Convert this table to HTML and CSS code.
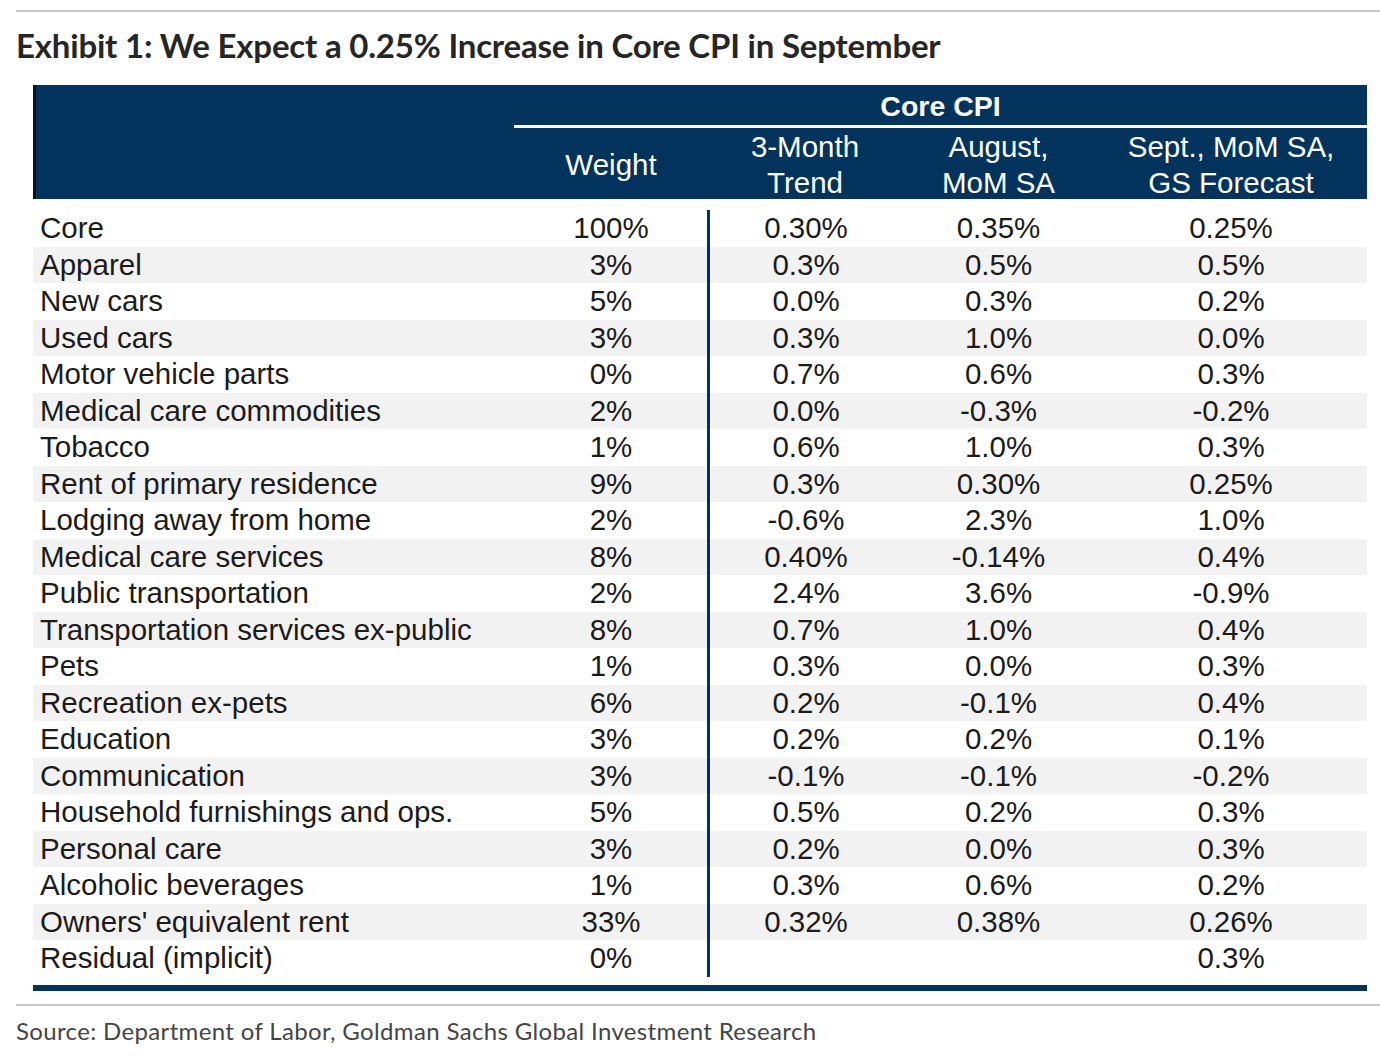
FILE: index.html
```html
<!DOCTYPE html>
<html lang="en">
<head>
<meta charset="utf-8">
<title>Exhibit 1: Core CPI</title>
<link rel="stylesheet" href="styles.css">
</head>
<body>
<div class="page">
  <div class="top-rule"></div>
  <h1 class="title">Exhibit 1: We Expect a 0.25% Increase in Core CPI in September</h1>
  <div class="exhibit">
    <div class="head">
      <div class="h-blank"></div>
      <div class="h-group">Core CPI</div>
      <div class="h-line"></div>
      <div class="h-col">Weight</div>
      <div class="h-col">3-Month<br>Trend</div>
      <div class="h-col">August,<br>MoM SA</div>
      <div class="h-col">Sept., MoM SA,<br>GS Forecast</div>
    </div>
    <div class="rows">
      <div class="row"><div class="lbl">Core</div><div class="num">100%</div><div class="num div">0.30%</div><div class="num">0.35%</div><div class="num">0.25%</div></div>
      <div class="row alt"><div class="lbl">Apparel</div><div class="num">3%</div><div class="num div">0.3%</div><div class="num">0.5%</div><div class="num">0.5%</div></div>
      <div class="row"><div class="lbl">New cars</div><div class="num">5%</div><div class="num div">0.0%</div><div class="num">0.3%</div><div class="num">0.2%</div></div>
      <div class="row alt"><div class="lbl">Used cars</div><div class="num">3%</div><div class="num div">0.3%</div><div class="num">1.0%</div><div class="num">0.0%</div></div>
      <div class="row"><div class="lbl">Motor vehicle parts</div><div class="num">0%</div><div class="num div">0.7%</div><div class="num">0.6%</div><div class="num">0.3%</div></div>
      <div class="row alt"><div class="lbl">Medical care commodities</div><div class="num">2%</div><div class="num div">0.0%</div><div class="num">-0.3%</div><div class="num">-0.2%</div></div>
      <div class="row"><div class="lbl">Tobacco</div><div class="num">1%</div><div class="num div">0.6%</div><div class="num">1.0%</div><div class="num">0.3%</div></div>
      <div class="row alt"><div class="lbl">Rent of primary residence</div><div class="num">9%</div><div class="num div">0.3%</div><div class="num">0.30%</div><div class="num">0.25%</div></div>
      <div class="row"><div class="lbl">Lodging away from home</div><div class="num">2%</div><div class="num div">-0.6%</div><div class="num">2.3%</div><div class="num">1.0%</div></div>
      <div class="row alt"><div class="lbl">Medical care services</div><div class="num">8%</div><div class="num div">0.40%</div><div class="num">-0.14%</div><div class="num">0.4%</div></div>
      <div class="row"><div class="lbl">Public transportation</div><div class="num">2%</div><div class="num div">2.4%</div><div class="num">3.6%</div><div class="num">-0.9%</div></div>
      <div class="row alt"><div class="lbl">Transportation services ex-public</div><div class="num">8%</div><div class="num div">0.7%</div><div class="num">1.0%</div><div class="num">0.4%</div></div>
      <div class="row"><div class="lbl">Pets</div><div class="num">1%</div><div class="num div">0.3%</div><div class="num">0.0%</div><div class="num">0.3%</div></div>
      <div class="row alt"><div class="lbl">Recreation ex-pets</div><div class="num">6%</div><div class="num div">0.2%</div><div class="num">-0.1%</div><div class="num">0.4%</div></div>
      <div class="row"><div class="lbl">Education</div><div class="num">3%</div><div class="num div">0.2%</div><div class="num">0.2%</div><div class="num">0.1%</div></div>
      <div class="row alt"><div class="lbl">Communication</div><div class="num">3%</div><div class="num div">-0.1%</div><div class="num">-0.1%</div><div class="num">-0.2%</div></div>
      <div class="row"><div class="lbl">Household furnishings and ops.</div><div class="num">5%</div><div class="num div">0.5%</div><div class="num">0.2%</div><div class="num">0.3%</div></div>
      <div class="row alt"><div class="lbl">Personal care</div><div class="num">3%</div><div class="num div">0.2%</div><div class="num">0.0%</div><div class="num">0.3%</div></div>
      <div class="row"><div class="lbl">Alcoholic beverages</div><div class="num">1%</div><div class="num div">0.3%</div><div class="num">0.6%</div><div class="num">0.2%</div></div>
      <div class="row alt"><div class="lbl">Owners' equivalent rent</div><div class="num">33%</div><div class="num div">0.32%</div><div class="num">0.38%</div><div class="num">0.26%</div></div>
      <div class="row"><div class="lbl">Residual (implicit)</div><div class="num">0%</div><div class="num div"></div><div class="num"></div><div class="num">0.3%</div></div>
    </div>
    <div class="bottom-bar"></div>
  </div>
  <div class="foot-rule"></div>
  <p class="source">Source: Department of Labor, Goldman Sachs Global Investment Research</p>
</div>
</body>
</html>
```

FILE: styles.css
```css
* { box-sizing: border-box; }

html, body {
  margin: 0;
  padding: 0;
  background: #ffffff;
}

.page {
  padding: 10px 0 0 16px;
  width: 1380px;
}

.top-rule {
  height: 2px;
  background: #c9c9c9;
}

.title {
  margin: 13px 0 19px 0;
  font-family: "Lato", "Open Sans", sans-serif;
  font-weight: 700;
  font-size: 33px;
  line-height: 41px;
  color: #262626;
  letter-spacing: -0.2px;
}

.exhibit {
  margin-left: 17px;
  width: 1334px;
  font-family: "Liberation Sans", Arial, sans-serif;
  font-size: 29.5px;
}

.head {
  display: grid;
  grid-template-columns: 478px 194px 194px 193px 272px;
  grid-template-rows: 40px 3px 71px;
  background: #02335d;
  border-left: 3px solid #111111;
  color: #ffffff;
}

.h-blank {
  grid-column: 1;
  grid-row: 1 / 4;
}

.h-group {
  grid-column: 2 / 6;
  grid-row: 1;
  font-weight: 700;
  font-size: 28.5px;
  text-align: center;
  line-height: 42px;
}

.h-line {
  grid-column: 2 / 6;
  grid-row: 2;
  background: #ffffff;
}

.h-col {
  grid-row: 3;
  display: flex;
  align-items: center;
  justify-content: center;
  text-align: center;
  line-height: 36px;
  padding-top: 3px;
}

.rows {
  margin-top: 11px;
}

.row {
  display: grid;
  grid-template-columns: 481px 194px 194px 193px 272px;
  height: 36.5px;
  line-height: 36.5px;
  color: #1b1b1b;
}

.row.alt {
  background: #f2f2f2;
}

.lbl {
  padding-left: 7px;
  white-space: nowrap;
}

.num {
  text-align: center;
}

.num.div {
  border-left: 3px solid #02335d;
  margin-left: -1px;
}

.bottom-bar {
  margin-top: 8px;
  height: 6px;
  background: #02335d;
}

.foot-rule {
  margin-top: 13px;
  height: 2px;
  background: #c9c9c9;
}

.source {
  margin: 11px 0 0 0;
  font-family: "Lato", "Open Sans", sans-serif;
  font-size: 24px;
  line-height: 28px;
  letter-spacing: 0.35px;
  color: #454545;
}
```
